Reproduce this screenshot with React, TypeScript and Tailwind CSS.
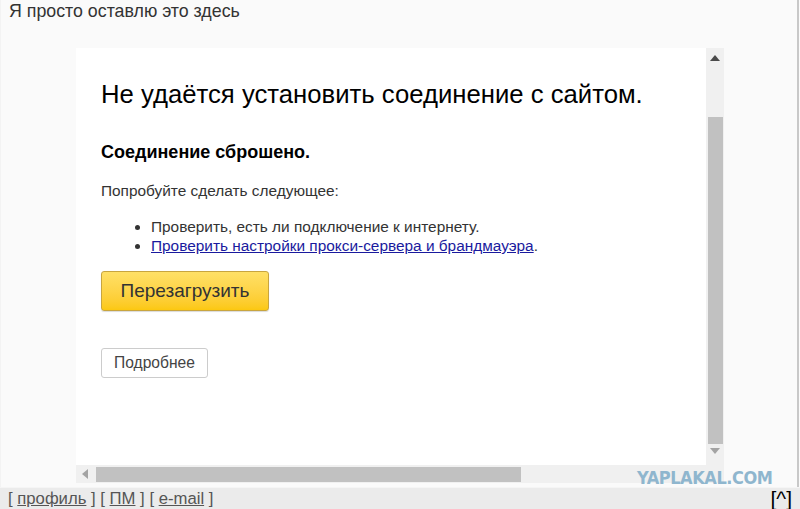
const arial = { fontFamily: '"Liberation Sans", Arial, sans-serif' };

function ScrollArrow({ dir }: { dir: "up" | "down" | "left" | "right" }) {
  const pts = {
    up: "0,6 5,0 10,6",
    down: "0,0 10,0 5,6",
    left: "6,0 6,10 0,5",
    right: "0,0 0,10 6,5",
  }[dir];
  const vertical = dir === "up" || dir === "down";
  return (
    <svg width={vertical ? 10 : 6} height={vertical ? 6 : 10} viewBox={vertical ? "0 0 10 6" : "0 0 6 10"}>
      <polygon points={pts} fill={dir === "up" ? "#4a4a4a" : "#a3a3a3"} />
    </svg>
  );
}

const ErrorPage = () => {
  return (
    <div className="flex flex-col w-[648px]">
      <div className="flex h-[417px]">
        <div className="w-[630px] bg-white pl-[25px] pt-[30px] text-black">
          <h1 className="text-[25.7px] leading-[32px]">Не удаётся установить соединение с сайтом.</h1>
          <h2 className="mt-[31px] text-[18px] font-bold leading-[22px]">Соединение сброшено.</h2>
          <p className="mt-[18px] text-[15.4px] leading-[19px] text-[#333]">Попробуйте сделать следующее:</p>
          <ul className="mt-[17px] pl-[50px] text-[15.4px] leading-[19px] text-[#333] list-disc">
            <li>Проверить, есть ли подключение к интернету.</li>
            <li>
              <a className="text-[#1a1a9e] underline" href="#">
                Проверить настройки прокси-сервера и брандмауэра
              </a>
              .
            </li>
          </ul>
          <button className="mt-[16px] w-[168px] h-[40px] rounded-[3px] border border-[#c8a53f] bg-gradient-to-b from-[#ffe066] to-[#fcc80f] text-[19px] text-[#333] shadow-[0_1px_1px_rgba(0,0,0,0.15)]">
            Перезагрузить
          </button>
          <div className="mt-[37px]">
            <button className="w-[107px] h-[30px] rounded-[3px] border border-[#ccc] bg-white text-[15.6px] text-[#444]">
              Подробнее
            </button>
          </div>
        </div>
        <div className="w-[18px] bg-[#f0f0f0] flex flex-col items-center">
          <div className="h-[19px] flex items-center">
            <ScrollArrow dir="up" />
          </div>
          <div className="mt-[50px] w-[15px] h-[327px] bg-[#c1c1c1]" />
          <div className="mt-[4px]">
            <ScrollArrow dir="down" />
          </div>
        </div>
      </div>
      <div className="h-[18px] bg-[#f0f0f0] flex items-center pl-[6px]">
        <ScrollArrow dir="left" />
        <div className="ml-[8px] w-[425px] h-[15px] bg-[#c1c1c1]" />
      </div>
    </div>
  );
};

export default function App() {
  return (
    <div className="w-[800px] h-[509px] bg-[#fafafa] relative overflow-hidden flex flex-col" style={arial}>
      <div className="flex-1 border-r-2 border-[#c8c8c8] mr-[1px] border-l border-l-[#f3f3f3]">
        <p className="pl-[8px] pt-[0px] text-[17.8px] leading-[22px] text-[#333]">Я просто оставлю это здесь</p>
        <div className="mt-[26px] pl-[75px] relative">
          <ErrorPage />
          <span
            className="absolute left-[636px] top-[420px] text-[18px] leading-[20px] font-bold tracking-[-0.5px] text-[#8fb6ce] scale-x-[0.9] origin-left"
            style={{ fontFamily: '"DejaVu Sans", sans-serif' }}
          >
            YAPLAKAL.COM
          </span>
        </div>
      </div>
      <div className="h-[22px] bg-[#ebebeb] border-t border-[#f5f5f5] flex items-center justify-between pl-[8px] pr-[8px] text-[16.7px] text-[#555]">
        <span>
          [ <a className="underline" href="#">профиль</a> ] [ <a className="underline" href="#">ПМ</a> ] [{" "}
          <a className="underline" href="#">e-mail</a> ]
        </span>
        <span className="text-[21px] leading-[22px] text-black">[^]</span>
      </div>
    </div>
  );
}
